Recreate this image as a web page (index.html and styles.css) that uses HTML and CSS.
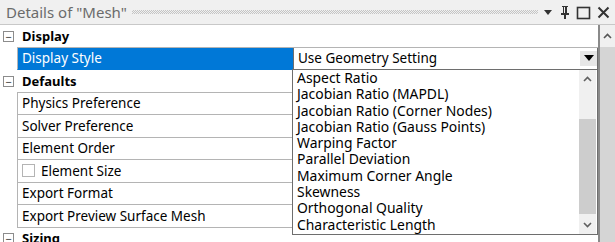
FILE: index.html
```html
<!DOCTYPE html>
<html>
<head>
<meta charset="utf-8">
<link rel="stylesheet" href="styles.css">
</head>
<body>
<div class="panel">
  <div class="titlebar">
    <span class="title">Details of "Mesh"</span>
    <span class="grip"></span>
    <span class="tb-icons">
      <svg class="ic" width="12" height="12" viewBox="0 0 12 12"><path d="M2 4h8l-4 5z" fill="#333"/></svg>
      <svg class="ic" width="12" height="16" viewBox="0 0 12 16"><path d="M3 2h6v1H8v6h2v2H7v4H5v-4H2V9h2V3H3z" fill="#333"/><rect x="5" y="3" width="1" height="6" fill="#f0f0f0"/></svg>
      <svg class="ic" width="15" height="15" viewBox="0 0 15 15"><rect x="1.5" y="2.5" width="12" height="11" fill="none" stroke="#333" stroke-width="1.6"/></svg>
      <svg class="ic" width="15" height="15" viewBox="0 0 15 15"><path d="M2.5 2.5l10 10M12.5 2.5l-10 10" stroke="#333" stroke-width="2"/></svg>
    </span>
  </div>
  <div class="main">
    <div class="grid">
      <div class="row section">
        <span class="gutter"><span class="toggle">−</span></span>
        <span class="sec-name">Display</span>
      </div>
      <div class="row">
        <span class="gutter"></span>
        <span class="name selected">Display Style</span>
        <span class="value">
          <span class="combo">
            <span class="combo-text">Use Geometry Setting</span>
            <span class="combo-btn"><svg width="10" height="6" viewBox="0 0 10 6"><path d="M0 0h10L5 6z" fill="#000"/></svg></span>
          </span>
        </span>
      </div>
      <div class="row section">
        <span class="gutter"><span class="toggle">−</span></span>
        <span class="sec-name">Defaults</span>
      </div>
      <div class="row"><span class="gutter"></span><span class="name">Physics Preference</span><span class="value"></span></div>
      <div class="row"><span class="gutter"></span><span class="name">Solver Preference</span><span class="value"></span></div>
      <div class="row"><span class="gutter"></span><span class="name">Element Order</span><span class="value"></span></div>
      <div class="row"><span class="gutter"></span><span class="name"><span class="check"></span>Element Size</span><span class="value"></span></div>
      <div class="row"><span class="gutter"></span><span class="name">Export Format</span><span class="value"></span></div>
      <div class="row"><span class="gutter"></span><span class="name">Export Preview Surface Mesh</span><span class="value"></span></div>
      <div class="row section">
        <span class="gutter"><span class="toggle">−</span></span>
        <span class="sec-name">Sizing</span>
      </div>
    </div>
    <div class="vscroll">
      <div class="vs-arrow"><svg width="9" height="6" viewBox="0 0 9 6"><path d="M1 5l3.5-3.5L8 5" fill="none" stroke="#555" stroke-width="1.6"/></svg></div>
      <div class="vs-thumb"></div>
    </div>
  </div>
  <div class="droplist">
    <ul class="items">
      <li>Aspect Ratio</li>
      <li>Jacobian Ratio (MAPDL)</li>
      <li>Jacobian Ratio (Corner Nodes)</li>
      <li>Jacobian Ratio (Gauss Points)</li>
      <li>Warping Factor</li>
      <li>Parallel Deviation</li>
      <li>Maximum Corner Angle</li>
      <li>Skewness</li>
      <li>Orthogonal Quality</li>
      <li>Characteristic Length</li>
    </ul>
    <div class="ls">
      <div class="ls-arrow"><svg width="9" height="6" viewBox="0 0 9 6"><path d="M1 5l3.5-3.5L8 5" fill="none" stroke="#606060" stroke-width="1.6"/></svg></div>
      <div class="ls-track"><div class="ls-thumb"></div></div>
      <div class="ls-arrow"><svg width="9" height="6" viewBox="0 0 9 6"><path d="M1 1l3.5 3.5L8 1" fill="none" stroke="#606060" stroke-width="1.6"/></svg></div>
    </div>
  </div>
</div>
</body>
</html>
```

FILE: styles.css
```css
* { box-sizing: border-box; }
html, body { margin: 0; padding: 0; }
body {
  width: 615px;
  height: 242px;
  overflow: hidden;
  background: #f0f0f0;
  font-family: "Noto Sans", "Open Sans", sans-serif;
  font-size: 13.5px;
  color: #000;
}
.panel {
  position: relative;
  width: 615px;
  height: 242px;
  display: flex;
  flex-direction: column;
}
.titlebar {
  height: 25px;
  display: flex;
  align-items: center;
  padding-left: 6px;
  background: #f0f0f0;
  border-bottom: 1px solid #c8c8c8;
}
.title {
  font-size: 15px;
  color: #6b6b6b;
  white-space: nowrap;
}
.grip {
  flex: 1;
  height: 4px;
  margin: 0 4px 0 5px;
  background-image: repeating-conic-gradient(#c4c4c4 0 25%, transparent 0 50%);
  background-size: 2px 2px;
}
.tb-icons {
  display: flex;
  align-items: center;
  gap: 5px;
  padding-right: 4px;
}
.ic { display: block; }
.main {
  flex: 1;
  display: flex;
  min-height: 0;
}
.grid {
  flex: 1;
  background: #fff;
  border-right: 2px solid #8a8a8a;
  overflow: hidden;
}
.row {
  height: 22.5px;
  display: flex;
  align-items: stretch;
}
.gutter {
  width: 17px;
  flex: none;
  display: flex;
  align-items: center;
  justify-content: center;
  background: #fff;
}
.toggle {
  width: 11px;
  height: 11px;
  border: 1px solid #8c8c8c;
  display: flex;
  align-items: center;
  justify-content: center;
  font-size: 11px;
  line-height: 1;
  color: #333;
  background: #fff;
}
.sec-name {
  flex: 1;
  font-weight: bold;
  font-size: 13px;
  padding-left: 5px;
  display: flex;
  align-items: center;
  border-bottom: 1px solid #b4b4b4;
}
.name {
  width: 276px;
  flex: none;
  display: flex;
  align-items: center;
  padding-left: 4px;
  border-left: 1px solid #b4b4b4;
  border-right: 1px solid #b4b4b4;
  border-bottom: 1px solid #b4b4b4;
  white-space: nowrap;
}
.name.selected {
  background: #0078d7;
  color: #fff;
  border-color: #0078d7;
  border-left-color: #b4b4b4;
}
.value {
  flex: 1;
  display: flex;
  border-bottom: 1px solid #b4b4b4;
}
.check {
  width: 13px;
  height: 13px;
  border: 1px solid #b4b4b4;
  background: #fff;
  margin-right: 6px;
}
.combo {
  flex: 1;
  display: flex;
  align-items: center;
  border-left: 1px solid #6e6e6e;
  border-right: 1px solid #6e6e6e;
  background: #fff;
}
.combo-text {
  flex: 1;
  padding-left: 4px;
}
.combo-btn {
  width: 17px;
  height: 15px;
  background: #e6e6e6;
  display: flex;
  align-items: center;
  justify-content: center;
}
.vscroll {
  width: 15px;
  flex: none;
  display: flex;
  flex-direction: column;
  background: #f0f0f0;
}
.vs-arrow {
  height: 22px;
  display: flex;
  align-items: center;
  justify-content: center;
}
.vs-thumb {
  flex: 1;
  background: #d5d5d5;
}
.droplist {
  position: absolute;
  left: 292px;
  top: 69px;
  width: 306px;
  height: 166px;
  border: 1px solid #6e6e6e;
  background: #fff;
  display: flex;
}
.items {
  list-style: none;
  margin: 0;
  padding: 0 0 0 4px;
  flex: 1;
  font-size: 13.9px;
}
.items li {
  height: 16.3px;
  line-height: 16.3px;
  white-space: nowrap;
}
.ls {
  width: 17px;
  flex: none;
  display: flex;
  flex-direction: column;
  background: #f0f0f0;
  margin-right: 1px;
}
.ls-arrow {
  height: 18px;
  display: flex;
  align-items: center;
  justify-content: center;
}
.ls-track {
  flex: 1;
  display: flex;
  flex-direction: column;
  padding-top: 31px;
  padding-bottom: 2px;
}
.ls-thumb {
  flex: 1;
  background: #cdcdcd;
}
```
